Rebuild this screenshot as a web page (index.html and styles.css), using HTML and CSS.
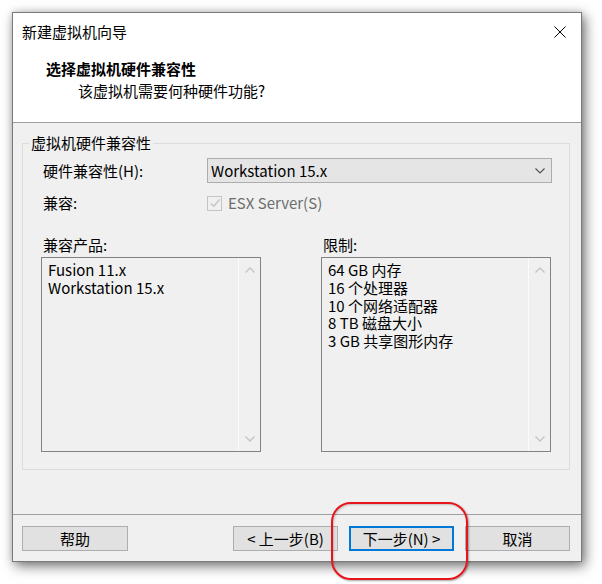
FILE: index.html
```html
<!DOCTYPE html>
<html lang="zh-CN">
<head>
<meta charset="utf-8">
<title>新建虚拟机向导</title>
<link rel="stylesheet" href="styles.css">
</head>
<body>
<div class="window">
  <div class="titlebar">
    <span class="title">新建虚拟机向导</span>
    <svg class="close" width="12" height="12" viewBox="0 0 12 12"><path d="M0.5 0.5 L11.5 11.5 M11.5 0.5 L0.5 11.5" stroke="#000" stroke-width="1" fill="none"/></svg>
  </div>
  <div class="header">
    <div class="h-title">选择虚拟机硬件兼容性</div>
    <div class="h-sub">该虚拟机需要何种硬件功能?</div>
  </div>
  <div class="content">
    <fieldset class="group">
      <legend class="legend">虚拟机硬件兼容性</legend>
      <div class="row row-combo">
        <span class="label">硬件兼容性(H):</span>
        <div class="combo">
          <span>Workstation 15.x</span>
          <svg class="chev" width="10" height="6" viewBox="0 0 10 6"><path d="M0.5 0.5 L5 5 L9.5 0.5" stroke="#555" stroke-width="1.2" fill="none"/></svg>
        </div>
      </div>
      <div class="row row-check">
        <span class="label">兼容:</span>
        <div class="check">
          <span class="box"><svg width="12" height="12" viewBox="0 0 12 12"><path d="M2 6.5 L4.8 9.2 L10.5 2.5" stroke="#c2c2c2" stroke-width="1.3" fill="none"/></svg></span>
          <span class="check-text">ESX Server(S)</span>
        </div>
      </div>
      <div class="lists">
        <div class="col col-left">
          <span class="label">兼容产品:</span>
          <div class="listbox">
            <div class="items">
              <div class="item">Fusion 11.x</div>
              <div class="item">Workstation 15.x</div>
            </div>
            <div class="scroll">
              <svg width="10" height="6" viewBox="0 0 10 6"><path d="M0.5 5.5 L5 1 L9.5 5.5" stroke="#c4c4c4" stroke-width="1.4" fill="none"/></svg>
              <svg width="10" height="6" viewBox="0 0 10 6"><path d="M0.5 0.5 L5 5 L9.5 0.5" stroke="#c4c4c4" stroke-width="1.4" fill="none"/></svg>
            </div>
          </div>
        </div>
        <div class="col col-right">
          <span class="label">限制:</span>
          <div class="listbox">
            <div class="items">
              <div class="item">64 GB 内存</div>
              <div class="item">16 个处理器</div>
              <div class="item">10 个网络适配器</div>
              <div class="item">8 TB 磁盘大小</div>
              <div class="item">3 GB 共享图形内存</div>
            </div>
            <div class="scroll">
              <svg width="10" height="6" viewBox="0 0 10 6"><path d="M0.5 5.5 L5 1 L9.5 5.5" stroke="#c4c4c4" stroke-width="1.4" fill="none"/></svg>
              <svg width="10" height="6" viewBox="0 0 10 6"><path d="M0.5 0.5 L5 5 L9.5 0.5" stroke="#c4c4c4" stroke-width="1.4" fill="none"/></svg>
            </div>
          </div>
        </div>
      </div>
    </fieldset>
  </div>
  <div class="footer">
    <button class="btn btn-help">帮助</button>
    <div class="nav">
      <button class="btn">&lt; 上一步(B)</button>
      <button class="btn btn-default">下一步(N) &gt;</button>
      <button class="btn">取消</button>
    </div>
  </div>
</div>
<div class="highlight"></div>
</body>
</html>
```
FILE: styles.css
```css
* { box-sizing: border-box; }
html, body { margin: 0; padding: 0; background: #fff; }
body {
  position: relative;
  width: 602px;
  height: 584px;
  overflow: hidden;
  font-family: "Noto Sans CJK SC", "Noto Sans", sans-serif;
  font-size: 15px;
  color: #000;
}
.window {
  margin: 12px 0 0 12px;
  width: 570px;
  height: 550px;
  border: 1px solid #7a7a7a;
  background: #f0f0f0;
  box-shadow: 3px 4px 12px rgba(0,0,0,0.55), 0 0 6px rgba(0,0,0,0.12);
  display: flex;
  flex-direction: column;
}
.titlebar {
  height: 38px;
  background: #fff;
  display: flex;
  align-items: center;
  justify-content: space-between;
  padding: 0 15px 0 9px;
  line-height: 20px;
}
.title { margin-top: -1px; }
.close { display: block; margin-top: -1px; }
.header {
  height: 72px;
  background: #fff;
  border-bottom: 1px solid #a0a0a0;
  padding-top: 7px;
  line-height: 22px;
}
.h-title { font-weight: bold; padding-left: 33px; }
.h-sub { padding-left: 65px; }
.content {
  height: 391px;
  padding: 10px 11px 0 9px;
}
.group {
  margin: 0;
  padding: 5px 17px 16px 18px;
  border: 1px solid #dcdcdc;
  height: 337px;
  min-width: 0;
}
.legend {
  margin-left: -12px;
  padding: 0 2px;
  line-height: 20px;
}
.label { line-height: 20px; padding-left: 2px; }
.row { display: flex; align-items: center; }
.row .label { width: 166px; flex: none; }
.row-combo { height: 25px; }
.combo {
  flex: 1;
  height: 25px;
  background: #e5e5e5;
  border: 1px solid #adadad;
  display: flex;
  align-items: center;
  justify-content: space-between;
  padding: 0 6px 0 3px;
  line-height: 20px;
}
.chev { display: block; }
.row-check { height: 26px; margin-top: 7px; }
.check { display: flex; align-items: center; gap: 6px; }
.box {
  width: 15px;
  height: 15px;
  border: 1px solid #c4c4c4;
  display: flex;
  align-items: center;
  justify-content: center;
}
.box svg { display: block; }
.check-text { color: #6d6d6d; line-height: 20px; }
.lists {
  display: flex;
  gap: 60px;
  margin-top: 19px;
}
.col { display: flex; flex-direction: column; gap: 2px; }
.col-left { width: 220px; }
.col-right { width: 230px; }
.listbox {
  height: 195px;
  border: 1px solid #828282;
  display: flex;
}
.items {
  flex: 1;
  padding: 3px 6px;
}
.item {
  height: 17.75px;
  line-height: 17.75px;
  white-space: nowrap;
}
.scroll {
  width: 22px;
  border-left: 1px solid #fbfbfb;
  display: flex;
  flex-direction: column;
  justify-content: space-between;
  align-items: center;
  padding: 9px 0 9px;
}
.scroll svg { display: block; }
.footer {
  flex: 1;
  border-top: 1px solid #a0a0a0;
  display: flex;
  justify-content: space-between;
  padding: 11px 11px 0 9px;
}
.nav { display: flex; gap: 11px; }
.btn {
  font-family: inherit;
  font-size: 15px;
  height: 25px;
  width: 105px;
  padding: 0;
  background: #e1e1e1;
  border: 1px solid #adadad;
  color: #000;
  line-height: 20px;
}
.btn-help { width: 106px; }
.btn-default { border: 2px solid #0078d7; }
.highlight {
  position: absolute;
  left: 331px;
  top: 502px;
  width: 137px;
  height: 78px;
  border: 2px solid #e8141c;
  border-radius: 20px;
  box-shadow: 1px 1px 2px rgba(0,0,0,0.35), inset 1px 1px 2px rgba(0,0,0,0.2);
}
```
